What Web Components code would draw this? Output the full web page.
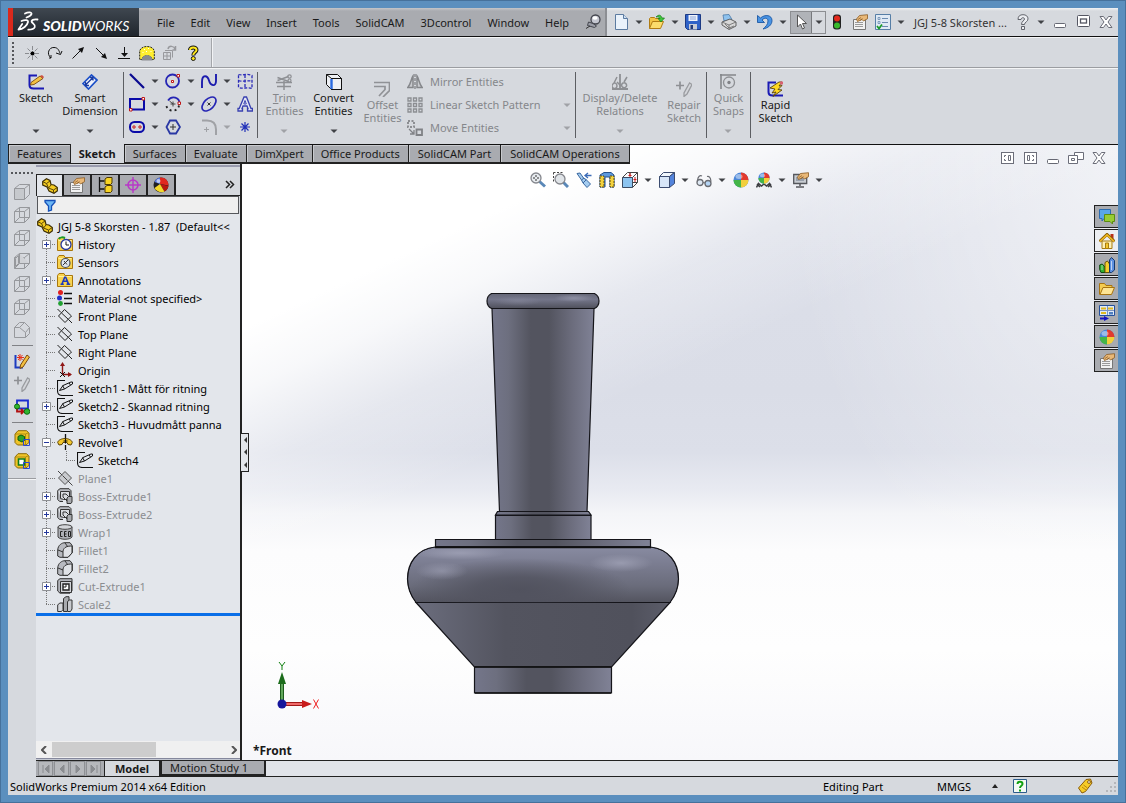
<!DOCTYPE html>
<html lang="en">
<head>
<meta charset="utf-8">
<meta name="viewport" content="width=device-width, initial-scale=1">
<title>SolidWorks Premium 2014</title>
<style>
    :root {
        --face: #d6d9de;
        --panel: #e3e6eb;
        --tab: #a9abb0;
        --ink: #1a1a1a;
        --dim: #85878b;
    }

    body {
        margin: 0;
        font-family: "Noto Sans", "Open Sans", sans-serif;
        font-size: 11px;
        line-height: 13px;
        color: var(--ink);
    }
</style>
</head>
<body>
<sw-app>
    <sw-titlebar slot="title"></sw-titlebar>
    <sw-quickbar slot="quick"></sw-quickbar>
    <sw-ribbon slot="ribbon"></sw-ribbon>
    <sw-tabs slot="tabs" items="Features,Sketch,Surfaces,Evaluate,DimXpert,Office Products,SolidCAM Part,SolidCAM Operations" active="Sketch"></sw-tabs>
    <sw-sidebar slot="side"></sw-sidebar>
    <sw-tree-panel slot="tree">
        <sw-tree-item icon="history" expand="plus">History</sw-tree-item>
        <sw-tree-item icon="sensors">Sensors</sw-tree-item>
        <sw-tree-item icon="annotations" expand="plus">Annotations</sw-tree-item>
        <sw-tree-item icon="material">Material &lt;not specified&gt;</sw-tree-item>
        <sw-tree-item icon="plane">Front Plane</sw-tree-item>
        <sw-tree-item icon="plane">Top Plane</sw-tree-item>
        <sw-tree-item icon="plane">Right Plane</sw-tree-item>
        <sw-tree-item icon="origin">Origin</sw-tree-item>
        <sw-tree-item icon="sketchItem">Sketch1 - Mått för ritning</sw-tree-item>
        <sw-tree-item icon="sketchItem" expand="plus">Sketch2 - Skannad ritning</sw-tree-item>
        <sw-tree-item icon="sketchItem">Sketch3 - Huvudmått panna</sw-tree-item>
        <sw-tree-item icon="revolve" expand="minus">Revolve1</sw-tree-item>
        <sw-tree-item icon="sketchItem" nested>Sketch4</sw-tree-item>
        <sw-tree-item icon="planeOff" off>Plane1</sw-tree-item>
        <sw-tree-item icon="extrude" expand="plus" off>Boss-Extrude1</sw-tree-item>
        <sw-tree-item icon="extrude" expand="plus" off>Boss-Extrude2</sw-tree-item>
        <sw-tree-item icon="wrap" expand="plus" off>Wrap1</sw-tree-item>
        <sw-tree-item icon="fillet" off>Fillet1</sw-tree-item>
        <sw-tree-item icon="fillet" off>Fillet2</sw-tree-item>
        <sw-tree-item icon="cut" expand="plus" off>Cut-Extrude1</sw-tree-item>
        <sw-tree-item icon="scale" off last>Scale2</sw-tree-item>
    </sw-tree-panel>
    <sw-viewport slot="view"></sw-viewport>
    <sw-study-tabs slot="study"></sw-study-tabs>
    <sw-status slot="status"></sw-status>
</sw-app>

<script>
// ---- icons, all on a 16x16 grid ----
const cube = (extra) => `<g fill="none" stroke="#96989c"><path d="M.5 4.500h10v11H.5zM.5 4.500l5-4h10v10l-5 5M10.500 4.500l5-4"/>${extra}</g>`;
const ball = `<circle cx="8" cy="8" r="7.500" fill="#4a86d8"/><path d="M8 8V.5A7.500 7.500 0 0 1 15.500 8z" fill="#e23a2e"/><path d="M8 8h7.500A7.500 7.500 0 0 1 8 15.500z" fill="#f2cf3c"/><path d="M8 8v7.500A7.500 7.500 0 0 1 .5 8z" fill="#44b548"/><ellipse cx="6" cy="4.500" rx="3.500" ry="2.500" fill="#fff" opacity=".45"/>`;
const folder = `<path d="M.5 14.500v-11l1.500-2h5l1 2h7.500v11z" fill="#f8d34f" stroke="#a8760c"/><path d="M1.500 4.500h13" stroke="#fff0a0"/>`;
const hand = `<path d="M4.500 5l3-3.500 8-.8v4l-4 2.300-1.500-1.500L5.500 7.500z" fill="#e9b878" stroke="#8a5a22" stroke-width=".8"/><path d="M6 5.500l3-2M8 6.500l2.500-2" stroke="#8a5a22" stroke-width=".7"/>`;
const sheet = `<path d="M1.500 5.500h12v10h-12z" fill="#f2f2f2" stroke="#777"/><path d="M3 8.500h8M3 10.500h8M3 12.500h8" stroke="#9a9a9a"/>`;
const pencil = `<path d="M3 8.500L12 2l3 2.500L6 10.500 2.500 11z" fill="#f3c040" stroke="#7a4a10" stroke-width=".9"/><path d="M12 2l2-1 2 2-1 1.500z" fill="#d05040"/>`;
const gold = `<path d="M1 4L4 .7h8.500L15 3v9.500L12 15H3.500L1 12.500z" fill="#f0c428" stroke="#8a6a08"/><path d="M1 4h10.500v11M11.500 4L15 2.500" fill="none" stroke="#b08c14"/>`;

const ICONS = {
    arrow: `<path d="M4.500 6.500h7L8 10z" fill="#404246"/>`,
    arrowDim: `<path d="M4.500 6.500h7L8 10z" fill="#a0a2a6"/>`,
    pin: `<ellipse cx="10.500" cy="5.500" rx="4.500" ry="4.500" fill="#c4c6d0" stroke="#44464e" stroke-width="1.300"/><path d="M3.500 8L8 9.500l3.500 2.500-2 1.500-7-2z" fill="#9a9ca6" stroke="#44464e"/><path d="M5 12l-4 2.500" stroke="#333"/><ellipse cx="10" cy="4" rx="2.500" ry="1.800" fill="#fff"/>`,
    newDoc: `<path d="M2.500.5h8l4 4v11h-12z" fill="#eaf2fb" stroke="#5c7ba0"/><path d="M10.500.5v4h4" fill="#cfe0f2" stroke="#5c7ba0"/>`,
    open: `<path d="M.5 14.500v-10l1-1h4l1 1h5v3" fill="#f3c445" stroke="#b07c14"/><path d="M.5 14.500l3-7h11l-3 7z" fill="#fbdc6c" stroke="#b07c14"/><path d="M7 3c3-3 5-2 6 1h2.500L12 8 9 4.500h2C10 3 9 2.500 7 3z" fill="#3fc63f" stroke="#157a15" stroke-width=".7"/>`,
    save: `<path d="M.5.5h15v15h-13l-2-2z" fill="#2f62c8" stroke="#1c3a84"/><path d="M3.500 1h9v6h-9z" fill="#f0f4fb"/><path d="M5 3h6M5 5h6" stroke="#8aa4d8"/><path d="M4 10h8v5.500H4z" fill="#c8ccd4"/><path d="M5.500 11h2.500v4H5.500z" fill="#223a78"/>`,
    print: `<path d="M3 7L2 1l6-.5 3 5z" fill="#8ec2ee" stroke="#4a78a8" stroke-width=".8"/><path d="M1 8l8-3 6 3v4l-7 3.500L1 11z" fill="#d8d8d8" stroke="#555" stroke-width=".9"/><path d="M1 8l7 3 7-3M8 11v4M4 10l4 4 5-2" stroke="#666" fill="none" stroke-width=".8"/>`,
    undo: `<path d="M.5 1.500v7h7L5 6c3-3 6-2 6 1 0 4-3 6-5 8 5-1 9-4 9-8.500C15 1 8 0 3.500 4z" fill="#4a94e4" stroke="#1c58a4" stroke-width=".9"/>`,
    cursor: `<path d="M4.500 1v12l3-3 2 5 2-1-2-4.500h4z" fill="#fff" stroke="#555"/>`,
    traffic: `<rect x="4" y=".5" width="8" height="15" rx="3" fill="#222"/><circle cx="8" cy="4.500" r="3" fill="#e2281c"/><circle cx="8" cy="11.500" r="3" fill="#38b82c"/>`,
    props: sheet + hand,
    list: `<path d="M.5.5h15v15H.5z" fill="#dfe9f4" stroke="#567ea6"/><path d="M3 3.500h2v2H3zM3 7.500h2v2H3z" fill="none" stroke="#6a8ab0" stroke-width=".8"/><path d="M7 4.500h6M7 8.500h6M7 12.500h6" stroke="#6a8ab0"/><path d="M2 12l2 2.500 3-4" fill="none" stroke="#1a9a2a" stroke-width="1.800"/>`,
    helpOutline: `<path d="M3 5.500C3 2 5 .7 8 .7s5 1.600 5 4.200c0 3-3.500 3-3.500 5.600h-3c0-3.800 3-3.600 3-5.500C9.500 3.200 6.200 3.200 6 5.500zM6.500 12.500h3v3h-3z" fill="#eceef2" stroke="#55575f" stroke-width=".9"/>`,
    min: `<rect x="2.500" y="9.500" width="11" height="4" rx="1" fill="#fff" stroke="#666873"/>`,
    max: `<rect x="2.500" y="1.500" width="12" height="11" rx="1" fill="#fff" stroke="#555763"/><rect x="5.500" y="5" width="6" height="4" fill="#fff" stroke="#555763" stroke-width="1.300"/>`,
    close: `<path d="M2 2.500h3.500L8 6l2.500-3.500H14L10 8l4 5.500h-3.500L8 10l-2.500 3.500H2L6 8z" fill="#fff" stroke="#6b6d78"/>`,
    restore: `<path d="M6.500 2.500h9v7h-9z" fill="#fff" stroke="#6c6e7a"/><path d="M.5 5.500h9v8h-9z" fill="#fff" stroke="#6c6e7a"/><path d="M3.500 8.500h3v2h-3z" fill="none" stroke="#6c6e7a"/>`,
    dockL: `<rect x="2.500" y="2.500" width="12" height="11" fill="#fff" stroke="#6c6e7a"/><path d="M7 5.500H5.500v1.500M5.500 9v1.500H7M9.500 5.500h2v5h-2z" fill="none" stroke="#6c6e7a"/>`,
    dockR: `<rect x="2.500" y="2.500" width="12" height="11" fill="#fff" stroke="#6c6e7a"/><path d="M10 5.500h1.500v1.500M11.500 9v1.500H10M5.500 5.500h2v5h-2z" fill="none" stroke="#6c6e7a"/>`,

    // quick bar
    qPoint: `<path d="M1 8.500h14M8.500 1v14M3.500 3.500l10 10M13.500 3.500l-10 10" stroke="#8a8c90" stroke-dasharray="4 1"/><circle cx="8.500" cy="8.500" r="2" fill="#000"/>`,
    qArc: `<path d="M4 13C-1 9 2 2 7 2.500c4 0 5 3 6 6M4 13v-3M4 13H2M9 8l4.500 1.500L15 6" fill="none" stroke="#111"/>`,
    qUp: `<path d="M2.500 13.500L12 4" stroke="#111" fill="none"/><path d="M14 2l-2 6-4-4z" fill="#111"/>`,
    qDown: `<path d="M3 3l9 9" stroke="#111" fill="none"/><path d="M14 14L8 12l4-4z" fill="#111"/>`,
    qDrop: `<path d="M2 13.500h12M8.500 2v8" stroke="#111"/><path d="M5 8h7l-3.500 4z" fill="#111"/>`,
    qDome: `<path d="M.7 14.500V6C2 0 14 0 15.300 6v8.500H13c0-5-10-5-10 0z" fill="#ffee30" stroke="#222" stroke-dasharray="2 1"/><path d="M2.500 15.500c0-7 11-7 11 0z" fill="#8a8c90"/><path d="M5 4.500h1M9 3.500h1M7 6.500h1M11.500 6.500h1M3.500 7.500h1" stroke="#fff"/>`,
    qCube: `<path d="M1.500 7.500h7v7h-7zM5 7.500v7M1.500 11h7M3 5.500h7.500v7" fill="none" stroke="#98999d"/><path d="M6 4c1-4 6-3 7 0M13.500 1v4h-3" fill="none" stroke="#98999d" stroke-width="1.500"/>`,
    qHelp: `<path d="M5 5c0-3.500 6.500-3.500 6.500 0C11.500 7.500 8.300 7 8.300 10.500" fill="none" stroke="#111" stroke-width="4"/><path d="M5 5c0-3.500 6.500-3.500 6.500 0C11.500 7.500 8.300 7 8.300 10" fill="none" stroke="#ffe81c" stroke-width="2"/><circle cx="8.300" cy="13.500" r="2" fill="#ffe81c" stroke="#111"/>`,

    // ribbon
    sketch: `<path d="M9 1.500H1.500V11c0 3 2 3.500 4 3.500H16" fill="none" stroke="#1a1ab4" stroke-width="2"/>` + pencil,
    smartDim: `<path d="M1 9.500L9.500 1l5.500 5-8.500 9z" fill="#eef2fa" stroke="#1c50c8" stroke-width="1.700"/><path d="M4 10.500l6.500-6.500M3.500 8v3.500H7M8 3.500h3v3" fill="none" stroke="#1c3ca0" stroke-width="1.300"/>`,
    line: `<path d="M1 1l14 14" stroke="#0a0a90" stroke-width="2.200"/>`,
    rect: `<path d="M1 3h14v10.500H1z" fill="none" stroke="#0a0aa8" stroke-width="2"/><path d="M13 1.500h2.500V4H13zM.5 12.500H3V15H.5z" fill="#fff" stroke="#c01818"/>`,
    slot: `<rect x="1" y="3" width="14" height="10" rx="4.500" fill="none" stroke="#0a0aa8" stroke-width="2"/><path d="M4 7h2v2H4zM10 7h2v2h-2z" fill="#fff" stroke="#c01818"/>`,
    circle: `<circle cx="7.500" cy="8" r="6.500" fill="none" stroke="#2626b4" stroke-width="1.800"/><path d="M6.500 7.500h2v2h-2zM12 1.500h2.500V4H12z" fill="#fff" stroke="#c01818"/>`,
    arc: `<path d="M3 4.500c4-5.500 11.500-3 11.500 3" fill="none" stroke="#2626b4" stroke-width="1.700"/><path d="M14 9.500c-1 7-12 7-13-1" fill="none" stroke="#222" stroke-width="1.800" stroke-dasharray="2 3"/><path d="M5.500 8h5M8 5.500v5M4.500 5L8 8" stroke="#444" fill="none"/><path d="M13 6h2.500v2.500H13z" fill="#fff" stroke="#c01818"/>`,
    polygon: `<path d="M5 1.500h6L15 8l-4 6.500H5L1.500 8z" fill="none" stroke="#2a38a4" stroke-width="1.800"/><path d="M5 8h6M8 5v6" stroke="#333"/>`,
    spline: `<path d="M1 15V9C1 1 6.500 2 8 7.500S15 14 15 8V1" fill="none" stroke="#1c1cae" stroke-width="1.900"/>`,
    ellipse: `<ellipse cx="8" cy="8" rx="8.500" ry="5" transform="rotate(-45 8 8)" fill="none" stroke="#2626b4" stroke-width="1.700"/><path d="M6.500 6.500l3 3M9.500 6.500l-3 3" stroke="#333"/>`,
    sketchFillet: `<path d="M1 1.500h5c6 0 9 3 9 9V16" fill="none" stroke="#a0a2a6" stroke-width="2"/><path d="M3 10.500h5M5.500 8v5" stroke="#a0a2a6"/>`,
    dashPlane: `<path d="M1.500 1.500C6 3 9 0 15 2.500v13c-5-2-9 1-13.500-1zM1.500 7.500c5 2 9-1 13.500 1M8 2v12" fill="none" stroke="#2a2ab8" stroke-width="1.300" stroke-dasharray="3 1.500"/>`,
    letterA: `<path d="M7 1h2.500l4.500 11.500h1.500v2.500h-5v-2.500H11L10 10H6l-1 2.500h.5v2.500H1v-2.500h1.200z" fill="#e4e6f4" stroke="#3840b0" stroke-width="1.300"/><path d="M6.800 8h2.500L8 4.500z" fill="#fff" stroke="#3840b0"/>`,
    point: `<path d="M3 8h10M8 3v10M4.500 4.500l7 7M11.500 4.500l-7 7" stroke="#2030b8" stroke-width="1.200"/>`,
    trim: `<path d="M0 8.500h16M1 12.500h14M8 7v9" stroke="#8e9094" stroke-width="1.500"/><path d="M1.500 3.500l11 4M1.500 6.500l11-4" stroke="#8e9094" stroke-width="1.500" fill="none"/><circle cx="13.500" cy="2.500" r="1.700" fill="none" stroke="#8e9094" stroke-width="1.200"/><circle cx="13.500" cy="6.500" r="1.500" fill="none" stroke="#8e9094" stroke-width="1.200"/>`,
    convert: `<path d="M.5.5h11l4 4v11h-10l-5-5z" fill="#eef0f3" stroke="#111"/><path d="M.5.5l5 4h10M5.500 4.500h10v11h-10z" fill="none" stroke="#111"/><path d="M5.500 5v10" stroke="#2a6ae0" stroke-width="2.400"/>`,
    offset: `<path d="M0 1.500h15.500v8L9 16M0 5.500h11v3L5 15" fill="none" stroke="#909296" stroke-width="1.700"/>`,
    mirror: `<path d="M8 0v16" stroke="#808286" stroke-width="1.300" stroke-dasharray="3 1"/><path d="M6 2C4 5 4 10 .8 13.500H6zM10 2c2 3 2 8 5.200 11.500H10z" fill="#c8cace" stroke="#85878b" stroke-width="1.500"/>`,
    pattern: `<path d="M1 1h3v3H1zM6.500 1h3v3h-3zM12 1h3v3h-3zM1 6.500h3v3H1zM6.500 6.500h3v3h-3zM12 6.500h3v3h-3zM1 12h3v3H1zM6.500 12h3v3h-3zM12 12h3v3h-3z" fill="none" stroke="#8c8e92" stroke-width="1.300"/>`,
    move: `<path d="M1 1h6v6H1z" fill="none" stroke="#8c8e92" stroke-width="2" stroke-dasharray="2 1.500"/><path d="M9.500 9.500h5.500v5.500H9.500z" fill="none" stroke="#808286" stroke-width="1.800"/><path d="M2 9l5 5M3 14h4v-4" fill="none" stroke="#808286" stroke-width="1.300"/>`,
    relations: `<path d="M0 15h16M8 0v14" stroke="#8e9094" stroke-width="1.800"/><path d="M5 3L2 9M5 12a2.500 2.500 0 1 1-4-2c1-2 4-1 4 2zM15 3l-3 5M14.500 12A2.500 2.500 0 1 1 11 9c2-1 4 1 3.500 3zM5 8l4 4" fill="none" stroke="#8e9094" stroke-width="1.500"/>`,
    repair: `<path d="M0 4.500h8M4 .5v8" stroke="#8e9094" stroke-width="1.700"/><path d="M13.500 2L8 12v3.500L11 13l5-9.500z" fill="#d4d6da" stroke="#9a9ca0" stroke-width="1.300"/>`,
    snaps: `<path d="M0 1h16M1 0v15" stroke="#85878b" stroke-width="1.600"/><circle cx="9" cy="8.500" r="5.500" fill="none" stroke="#8e9094" stroke-width="1.300"/><circle cx="9" cy="8.500" r="1.700" fill="#808286"/>`,
    rapid: `<path d="M9 1.500H1.500V11c0 3 2 3.500 4 3.500H16" fill="none" stroke="#1a1ab4" stroke-width="2"/><path d="M12 1L3 7l5 1-3 4 4-1-3 4.500L15 9l-4-.5 4-4-3 .5 3-4z" fill="#ffd820" stroke="#5a4208" stroke-width=".9"/><circle cx="14.500" cy="2" r="1.700" fill="#d86070"/>`,

    // side bar
    cubeFront: cube('<path d="M1 5h9v10H1z" fill="#c6c9cd" stroke="none"/>'),
    cube1: cube('<path d="M5.500.500v10h10M5.500 10.500l-5 5"/>'),
    cube2: cube('<path d="M5.500.500v10h10M5.500 10.500l-5 5M1.500 5.500l3-3v8l-3 3z" fill="#d0d2d6"/>'),
    cubeCut: `<path d="M.5 5.500l5-5h5l5 5v6l-4 4H.5zM.5 5.500h5l6 5v5M10.500.5l-5 5M15.500 5.500l-4 5" fill="none" stroke="#96989c"/>`,
    penRed: `<path d="M1.500 2v12.500H9" fill="none" stroke="#1c3cc0" stroke-width="2"/><path d="M13 2l2.500 2L9 14l-3 1.500L6.500 12z" fill="#f3c040" stroke="#7a4a10"/><path d="M6 1v7M3 4.500h7M4 2l4.500 5M8.500 2L4 7" stroke="#e83018"/>`,
    blueRed: `<path d="M3 1.500h11v8H3z" fill="none" stroke="#1c2cd0" stroke-width="1.800"/><path d="M3 9v3.500h6M7 10l2.500 2.500L7 15" fill="none" stroke="#b01010" stroke-width="1.800"/><circle cx="3" cy="7.500" r="2.500" fill="#2fb42f" stroke="#0c6c0c"/><circle cx="13" cy="12.500" r="2.800" fill="#2fb42f" stroke="#0c6c0c"/>`,
    goldGreen: gold + `<path d="M4 6.500L7 5l3.500 1.500v4L8 12l-4-2z" fill="#2ca428" stroke="#0c5c0c"/><path d="M9.500 9.500h6v6h-6z" fill="none" stroke="#2a48d0"/>`,
    goldHole: gold + `<path d="M4.500 6h6v6h-6z" fill="#fff" stroke="#0c7c1c" stroke-width="1.600"/><path d="M9.500 9.500h6v6h-6z" fill="none" stroke="#2a48d0"/>`,

    // panel tabs and tree
    part: `<path d="M.7 3.500L4.500.8 8 2.500l1 4 3 .5 3.300 2.500v3.500L12 15.300 7 13l-2-4-4.300-2z" fill="#f4cc22" stroke="#3c2e04" stroke-width="1.200"/><path d="M1 3.800l3.500 1.700 2 4.500 5 2 3.500-2.300M4.500 5.500L8 3M6.500 10L9 7M11.500 12v3" fill="none" stroke="#5a4608"/>`,
    config: `<path d="M2.500 0v15M2.500 4h5M2.500 12h5" stroke="#111" stroke-width="1.300" fill="none"/><path d="M8 2l2-1.500h5V6l-1.500 1.500H8zM8 10l2-1.500h5V14l-1.500 1.500H8z" fill="#f8d424" stroke="#4c3a06"/>`,
    target: `<circle cx="8" cy="8" r="5" fill="none" stroke="#b838c8" stroke-width="1.600"/><path d="M8 0v16M0 8h16" stroke="#b838c8" stroke-width="1.400"/>`,
    ballDark: `<circle cx="8" cy="8" r="7.500" fill="#202024"/><path d="M7 7L1.500 5A7.500 7.500 0 0 1 7 .5z" fill="#5878e0"/><path d="M7 7V.5c5-.5 8.500 3 8.500 8z" fill="#e02820"/><path d="M7 7l8.500 2c-.5 2.500-2 4.500-4 5.500z" fill="#b81810"/><path d="M7 7l4.500 7.700C8 16 3 14.500 1.500 11z" fill="#f4d82c"/><circle cx="5.500" cy="4" r="2" fill="#fff" opacity=".6"/>`,
    filter: `<path d="M3 3.500h10v1.500L9.500 9v4l-3 1V9L3 5z" fill="#6cb6f4" stroke="#1450b8" stroke-width="1.300"/>`,
    history: folder + `<circle cx="9" cy="8.500" r="5" fill="#fff" stroke="#2838a0" stroke-width="1.300"/><path d="M9 5.500v3.500h3" fill="none" stroke="#111"/><path d="M2 3c1-2 4-2 6-1" stroke="#1a9a2a" stroke-width="2" fill="none"/>`,
    sensors: folder + `<circle cx="8.500" cy="9" r="4.500" fill="#dfe6f0" stroke="#444c60" stroke-width="1.200"/><path d="M6 11l5-5M7 7l3 3.500" stroke="#333"/>`,
    annotations: folder + `<path d="M7.200 4.500h2l3 7h1v1.500H9.500v-1.500h.7L9.800 10H6.500l-.5 1.500h.8v1.500H3.500v-1.500h.8z" fill="#1c38c0"/><path d="M7.200 8.500h2L8.200 6z" fill="#f8d34f"/>`,
    material: `<path d="M7 3.500h8M7 8.500h8M7 13.500h8" stroke="#111" stroke-width="1.400"/><circle cx="3.500" cy="2.500" r="2.500" fill="#e02020"/><circle cx="2.500" cy="8" r="2.500" fill="#2030c8"/><circle cx="3.500" cy="13.500" r="2.400" fill="#20a030"/>`,
    plane: `<path d="M7.500 1.500l7 6.500-6.500 6.500L1.500 8zM.5 1l3.500 3.500M11.500 11.500l3.500 3.500M4.500 5l7 6.500" fill="none" stroke="#222"/>`,
    planeOff: `<path d="M8 1.500L14.500 8 8 14.500 1.500 8z" fill="#c8cace" stroke="#555"/><path d="M1 1l4 4M11 11l4.500 4.500M5.500 5.500l5 5" fill="none" stroke="#444"/>`,
    origin: `<path d="M5.500 3v9M5.500 12.500H14" stroke="#901818" stroke-width="1.400"/><path d="M3 4l2.500-4L8 4zM11 10l4 2.500-4 2.500z" fill="#901818"/><path d="M3 10l5 5M8 10l-5 5" stroke="#111"/>`,
    sketchItem: `<path d="M8 .5H.5v10c0 4 2 5 5 5H16" fill="none" stroke="#111" stroke-width="1.100"/><path d="M2.500 10.500l3.500-5 8-3.500h1.500v2l-8 5zM5.500 5.500L7.500 9M12 3l1.500 2" fill="none" stroke="#111"/>`,
    revolve: `<path d="M8.500 0v4M8.500 11v5" stroke="#111" stroke-width="1.300"/><path d="M.7 8.500C1 6 5 4.500 8 4.500s7 1.500 7.300 4L14 11l-3-.5-1-2H6l-1 2-3 .5z" fill="#f2c62c" stroke="#5c4406"/><path d="M8.500 4.500v5M6.500 7h4" stroke="#111"/>`,
    extrude: `<path d="M.7 2.500L3 .7h9l2 2V8M.7 2.500v9l2 2H6" fill="#b8bac0" stroke="#333"/><path d="M3.500 3.500h9v8h-6l-3-1z" fill="#d8dade" stroke="#333"/><path d="M6 6h3l3 3M6 6v3l4 4" stroke="#333" fill="none"/><path d="M10 10l1.500-1.500H15V14l-1 1.500h-4z" fill="#a8aaae" stroke="#333"/>`,
    wrap: `<path d="M1 3v10c2 3 12 3 14 0V3z" fill="#aeb0b6" stroke="#444"/><ellipse cx="8" cy="3" rx="7" ry="2.300" fill="#d4d6da" stroke="#444"/><path d="M5.500 7.500H3.500v5h2M9.500 7.500h-2v5h2M7.500 10h2M11.500 7.500h2v5h-2z" fill="none" stroke="#222"/>`,
    fillet: `<path d="M.7 14V8C1 3 5 .7 8 .7h5l2.300 3v7L11 15.300H3z" fill="#b8bac0" stroke="#333"/><path d="M6 15.300V9c1-4 4-5 9-5v7l-4 4.300z" fill="#e0e2e6" stroke="#333"/><path d="M1 8l5 2M8 1l3 4" stroke="#333"/>`,
    cut: `<path d="M.7 2.500L3 .7h12v12l-2 2.500H3L.7 13z" fill="#b4b6bc" stroke="#333"/><path d="M3.500 3.500h11v11h-11z" fill="#d4d6da" stroke="#333"/><path d="M6 6h6v6H6z" fill="#fff" stroke="#222" stroke-width="1.400"/><path d="M9 6v3H6" fill="none" stroke="#222"/>`,
    scale: `<path d="M.7 9l2-2H6v6.500l-1.500 2H.7z" fill="#d4d6da" stroke="#333"/><path d="M6.500 2.500L9 .7h3v12l-2 2.800H6.500z" fill="#a8aaae" stroke="#333"/><path d="M10.500 5.500L12.500 4H15v9l-1.500 2.500h-3z" fill="#c8cace" stroke="#333"/>`,

    // heads-up bar
    zoomFit: `<path d="M9.500 9.500l5.500 5" stroke="#5a88b8" stroke-width="3"/><circle cx="6" cy="6" r="5" fill="#e8ecf0" stroke="#85878d" stroke-width="1.300"/><path d="M6 3v6M3 6h6" stroke="#333"/><path d="M5 5h2v2H5z" fill="#e8ecf0"/>`,
    zoomArea: `<path d="M10.500 10.500l4.500 4.500" stroke="#5a88b8" stroke-width="3"/><path d="M.5.5h10M.5.5v10" stroke="#444" stroke-dasharray="2 1.500"/><circle cx="7" cy="7" r="5" fill="#e0e4e8" stroke="#85878d" stroke-width="1.300"/>`,
    prevView: `<path d="M1 1.500l3-.5 3.500 5L10 7.500l4.500 4.500-3.500 3.500L7 11l-1.500-3z" fill="#a4ccf0" stroke="#3a68a0"/><path d="M5.500 8l2.500-2M7 11l3.500-3.500" stroke="#3a68a0"/><path d="M9.500 3.500h6M12 1L9 3.500 12 6" stroke="#3c6cb8" stroke-width="1.300" fill="none"/>`,
    section: `<path d="M1 3l4-2.500h7l3 2.500v12h-4V5H6v10H1z" fill="#5c98dc" stroke="#24508c"/><path d="M1 4h4v11H1zM11 4h4v11h-4z" fill="#f4d23c" stroke="#5a4a10" stroke-dasharray="2 1"/>`,
    viewCube: `<path d="M.5 5.500h10v10H.5z" fill="#8cc4f0" stroke="#3c4c64"/><path d="M.5 5.500l5-5h10v10l-5 5M10.500 5.500l5-5M8 3v-2.500M10.500 10.500h5" fill="none" stroke="#444"/><path d="M8 1v4M6.500 3.500h3M13 5v5M11.500 7.500h3" stroke="#d02020"/>`,
    shaded: `<path d="M.5 4.500h10v11H.5z" fill="#d8e6f8" stroke="#3c4c70"/><path d="M.5 4.500l4-4h11l-5 4z" fill="#f0f6fc" stroke="#3c4c70"/><path d="M10.500 4.500l5-4v11l-5 4z" fill="#5484dc" stroke="#3c4c70"/>`,
    glasses: `<circle cx="4" cy="10.500" r="3" fill="#dfe9f4" stroke="#6a6c72" stroke-width="1.300"/><circle cx="12" cy="11.500" r="3" fill="#b4d4f4" stroke="#6a6c72" stroke-width="1.300"/><path d="M7 10.500l2 .5M1.500 8.500C2 4 4 3 6 4M15 9.500C14.500 5 13 4 11 4.500" fill="none" stroke="#6a6c72" stroke-width="1.200"/>`,
    ball,
    ballScene: `<path d="M.5 15.500l2-4 3 2.500 2.500-2 2.500 2 3-2.500 2 4M1 12l3 3M15 12l-3 3" fill="none" stroke="#3c3e42" stroke-width="1.500"/><g transform="translate(2 0) scale(.75)">${ball}</g>`,
    monitor: `<path d="M.7 2.500h13v9H.7z" fill="#c8ccd2" stroke="#55575c" stroke-width="1.300"/><path d="M3 5h8v4H3z" fill="#98a0ac"/><path d="M7 12v2M3 15h8" stroke="#55575c" stroke-width="1.500"/>${hand}`,

    // task pane
    chat: `<path d="M.5.5h11v9H5l-2 2.500v-2.500H.5z" fill="#5aa6e8" stroke="#2c6cb0"/><path d="M5.500 5.500h10v7h-2V15L11 12.500H5.500z" fill="#98cc34" stroke="#5c8c10"/>`,
    home: `<path d="M11.500 1h3v6h-3z" fill="#b83018"/><path d="M3 8h10v7.500H3z" fill="#fdf0b8" stroke="#a87c10"/><path d="M.5 8.500L8 1.500l7.500 7" fill="none" stroke="#8a6008" stroke-width="3"/><path d="M.8 8.500L8 1.800l7.200 6.700" fill="none" stroke="#f0b820" stroke-width="1.700"/><path d="M6.500 10h3v5.500h-3z" fill="#f4c830" stroke="#a87c10"/>`,
    library: `<path d="M.7 8l2.500-1L6 10v5.500H2l-1.300-3z" fill="#30b030" stroke="#104c10"/><path d="M6 5.500L8.500 4l2 3v8.500H6z" fill="#f4d030" stroke="#6c5408"/><path d="M10.500 3l2-2.500 3 3V13l-3 2.500h-2z" fill="#5c90e0" stroke="#14386c"/><path d="M3 8v5M12.500 4v9" stroke="#fff" opacity=".6"/>`,
    folderOpen: `<path d="M.5 13.500v-11h5l1.500 2h6v3" fill="#f4cc50" stroke="#a87410"/><path d="M1 13.500l3-7h11.500l-3 7z" fill="#fde494" stroke="#a87410"/>`,
    palette: `<path d="M.5.5h15v10H.5z" fill="#dfeaf8" stroke="#24509c"/><path d="M2 3.500h5M9 3.500h5M2 8h5" stroke="#e0b820" stroke-width="2"/><path d="M8.500 1v9M1 5.500h14" stroke="#7c94c0"/><path d="M10 7h4v2.500h-4z" fill="#5080c0"/><path d="M1 13.500h5" stroke="#1414c0" stroke-width="2"/><path d="M5 11l5 2.500L5 16z" fill="#1414c0"/>`,

    // status bar
    helpTip: `<path d="M1.500 1.500h13v13h-13z" fill="#f4faf4" stroke="#2c5c8c"/><path d="M5.500 6c0-3 5-3 5 0 0 2-2.500 1.500-2.500 4M8 11.500v2" fill="none" stroke="#10a010" stroke-width="2"/>`,
    tag: `<path d="M1.500 10L9 1.500l4.500-.5L15 5 8.500 13.500 5 15z" fill="#f6cc28" stroke="#8a5c08"/><circle cx="12" cy="4" r="1.400" fill="#fff" stroke="#8a5c08"/><path d="M5 9l4 3M6.500 7l4 3" stroke="#b88410"/>`,
    grip: `<path d="M12 4h2v2h-2zM8 8h2v2H8zM12 8h2v2h-2zM4 12h2v2H4zM8 12h2v2H8zM12 12h2v2h-2z" fill="#b4b6ba"/>`,
};

const BASE = `
    :host, * { box-sizing: border-box; }
    button {
        margin: 0; padding: 0; border: 0; background: none;
        font: inherit; color: inherit; cursor: default;
    }
`;

class SwElement extends HTMLElement {
    constructor() {
        super();
        this.attachShadow({ mode: 'open' });
    }

    connectedCallback() {
        this.shadowRoot.innerHTML = `<style>${BASE}${this.css()}</style>${this.html()}`;
    }

    css() { return ''; }
    html() { return '<slot></slot>'; }
}

class SwIcon extends SwElement {
    css() {
        return `:host { display: block; flex: none; width: 16px; height: 16px; } svg { display: block; }`;
    }
    html() {
        return `<svg width="16" height="16" viewBox="0 0 16 16" aria-hidden="true">${ICONS[this.getAttribute('name')] || ''}</svg>`;
    }
}

// icon button with an optional drop arrow on its right
class SwTool extends SwElement {
    css() {
        return `
            :host { display: flex; align-items: center; flex: none; height: 23px; }
            :host([pressed]) { outline: 1px solid #8c8e92; outline-offset: -1px; }
            button { display: flex; align-items: center; justify-content: center; height: 23px; }
            .drop { width: 20px; }
            :host([pressed]) .main { width: 22px; background: #b0b3b8; border: 1px solid #77797d; }
            :host([pressed]) .drop { width: 14px; }
        `;
    }
    html() {
        const label = this.getAttribute('label') || this.getAttribute('icon');
        const drop = this.hasAttribute('drop')
            ? `<button class="drop" aria-label="${label} options"><sw-icon name="${this.hasAttribute('dim') ? 'arrowDim' : 'arrow'}"></sw-icon></button>` : '';
        return `<button class="main" aria-label="${label}"><sw-icon name="${this.getAttribute('icon')}"></sw-icon></button>${drop}`;
    }
}

class SwApp extends SwElement {
    css() {
        return `
            :host { display: flex; min-height: 100vh; padding: 1px; background: #46719b; }
            .frame { flex: 1; display: flex; padding: 7px; background: #5b8fbe; }
            .window { flex: 1; min-width: 0; display: flex; flex-direction: column; background: var(--face); }
            .body { flex: 1; display: flex; position: relative; }
            .tabs { position: absolute; left: 0; top: 0; z-index: 2; }
            .side { width: 28px; padding-top: 20px; flex: none; }
            .work { flex: 1; min-width: 0; display: flex; flex-direction: column; }
            .split { flex: 1; display: flex; }
            .tree { width: 206px; flex: none; display: flex; padding-top: 20px; border-right: 2px solid #222; background: var(--face); }
            .tree ::slotted(*) { flex: 1; min-width: 0; }
            .view { flex: 1; min-width: 0; display: flex; }
            .view ::slotted(*) { flex: 1; }
            .handle {
                position: absolute; left: 233px; top: 288px; width: 8px; height: 39px;
                display: flex; flex-direction: column; justify-content: space-around; align-items: center;
                background: var(--panel); border: 1px solid #222; border-left: 0; z-index: 2;
            }
        `;
    }
    html() {
        const tick = '<svg width="4" height="6"><path d="M4 0v6L1 3z" fill="#333"/></svg>';
        return `
            <div class="frame"><div class="window">
                <slot name="title"></slot>
                <slot name="quick"></slot>
                <slot name="ribbon"></slot>
                <div class="body">
                    <div class="tabs"><slot name="tabs"></slot></div>
                    <div class="side"><slot name="side"></slot></div>
                    <div class="work">
                        <div class="split">
                            <div class="tree"><slot name="tree"></slot></div>
                            <div class="view"><slot name="view"></slot></div>
                        </div>
                        <slot name="study"></slot>
                    </div>
                    <button class="handle" aria-label="Collapse panel">${tick}${tick}${tick}</button>
                </div>
                <slot name="status"></slot>
            </div></div>
        `;
    }
}

class SwTitlebar extends SwElement {
    css() {
        return `
            :host { display: flex; align-items: stretch; height: 29px; border-bottom: 1px solid #111; background: linear-gradient(#f0f2f4, var(--face) 3px); }
            .logo { display: flex; align-items: center; width: 131px; border-left: 5px solid #da291c; background: linear-gradient(#3f4750, #20262d); }
            .logo svg { display: block; }
            nav { display: flex; align-items: center; justify-content: space-between; width: 468px; padding: 0 4px 0 18px; background: linear-gradient(#c4c6ca, var(--tab) 3px); border-right: 2px solid #8c8e93; }
            .tools { display: flex; align-items: center; padding-left: 6px; }
            .tools sw-tool[pressed] { margin: 0 3px 0 -3px; }
            .gap { display: flex; gap: 7px; }
            .doc { flex: 1; align-self: center; padding-left: 3px; white-space: nowrap; overflow: hidden; color: #333; }
            .win { display: flex; align-items: center; gap: 7px; padding-right: 4px; }
            .win sw-tool:first-child { margin-right: -6px; }
        `;
    }
    html() {
        const menus = ['File', 'Edit', 'View', 'Insert', 'Tools', 'SolidCAM', '3Dcontrol', 'Window', 'Help'];
        return `
            <div class="logo">
                <svg width="126" height="28" viewBox="0 0 126 28" role="img" aria-label="SolidWorks">
                    <g fill="none" stroke="#fff" stroke-width="1.800" stroke-linecap="round" stroke-linejoin="round">
                        <path d="M12 5.500c3-1.500 7-1.500 6.500.5-.5 1.500-3 2.800-5 3.500"/>
                        <path d="M8.500 13c3-1.300 7-1.300 6.500 1-.7 3.500-5 7.300-9.500 7.500l3.700-5.500"/>
                        <path d="M24.500 11.500c-4-.6-6.500.8-5.700 2.500.8 1.700 4 2.500 3 5-.8 2-3.500 2.700-6.500 2.700"/>
                    </g>
                    <text x="30" y="23" font-family="Lato, sans-serif" font-size="14" font-style="italic" fill="#fff"><tspan font-weight="900">SOLID</tspan><tspan font-weight="400">WORKS</tspan></text>
                </svg>
            </div>
            <nav aria-label="Main menu">
                ${menus.map((m) => `<button>${m}</button>`).join('')}
                <button aria-label="Pin menu"><sw-icon name="pin"></sw-icon></button>
            </nav>
            <div class="tools">
                <sw-tool icon="newDoc" label="New" drop></sw-tool>
                <sw-tool icon="open" label="Open" drop></sw-tool>
                <sw-tool icon="save" label="Save" drop></sw-tool>
                <sw-tool icon="print" label="Print" drop></sw-tool>
                <sw-tool icon="undo" label="Undo" drop></sw-tool>
                <sw-tool icon="cursor" label="Select" drop pressed></sw-tool>
                <div class="gap">
                    <sw-tool icon="traffic" label="Rebuild"></sw-tool>
                    <sw-tool icon="props" label="File properties"></sw-tool>
                    <sw-tool icon="list" label="Options" drop></sw-tool>
                </div>
            </div>
            <div class="doc">JGJ 5-8 Skorsten ...</div>
            <div class="win">
                <sw-tool icon="helpOutline" label="Help" drop></sw-tool>
                <sw-tool icon="min" label="Minimize"></sw-tool>
                <sw-tool icon="max" label="Maximize"></sw-tool>
                <sw-tool icon="close" label="Close"></sw-tool>
            </div>
        `;
    }
}

class SwQuickbar extends SwElement {
    css() {
        return `
            :host { display: flex; height: 31px; border-top: 1px solid #f4f5f6; border-bottom: 1px solid #9b9da1; }
            .bar { display: flex; align-items: center; gap: 7px; width: 204px; padding-left: 4px; border-right: 1px solid #a4a6aa; box-shadow: 1px 0 #f2f3f5; }
            .grab { width: 2px; height: 22px; margin-right: 3px; background: repeating-linear-gradient(#55575b 0 2px, transparent 2px 4px); }
        `;
    }
    html() {
        return `<div class="bar"><span class="grab"></span>
            ${['qPoint', 'qArc', 'qUp', 'qDown', 'qDrop', 'qDome', 'qCube', 'qHelp'].map((n) => `<sw-tool icon="${n}"></sw-tool>`).join('')}
        </div>`;
    }
}

// tall ribbon button: icon, caption, optional arrow pinned to the bottom
class SwBigButton extends SwElement {
    css() {
        return `
            :host { display: flex; flex: none; justify-content: center; }
            :host([dim]) { color: var(--dim); }
            button { display: flex; flex-direction: column; align-items: center; justify-content: space-between; padding: 5px 0; }
            :host([plain]) button { padding-top: 12px; justify-content: flex-start; }
            span { display: flex; flex-direction: column; align-items: center; text-align: center; }
            slot { display: block; }
            sw-icon { margin-bottom: 1px; }
            .drop { margin-bottom: 0; }
        `;
    }
    html() {
        const arrow = this.hasAttribute('plain') ? '' : `<sw-icon class="drop" name="${this.hasAttribute('dim') ? 'arrowDim' : 'arrow'}"></sw-icon>`;
        return `<button><span><sw-icon name="${this.getAttribute('icon')}"></sw-icon><slot></slot></span>${arrow}</button>`;
    }
}

class SwRibbon extends SwElement {
    css() {
        return `
            :host { display: flex; height: 77px; padding-left: 1px; border-top: 1px solid #f4f5f6; border-bottom: 1px solid #111; }
            hr { width: 1px; height: 66px; margin: 3px 0 0; border: 0; background: #5c5e62; flex: none; }
            .w40 { width: 40px; }
            .w43 { width: 43px; }
            .w49 { width: 49px; }
            .w54 { width: 54px; }
            .w88 { width: 88px; }
            .grid { display: grid; grid-template-columns: repeat(4, 36px); grid-auto-rows: 23px; width: 128px; margin-left: 5px; }
            .rows { display: grid; grid-auto-rows: 23px; width: 168px; padding-top: 1px; }
            .row { display: flex; align-items: center; color: var(--dim); }
            .row button { display: flex; align-items: center; gap: 7px; flex: 1; }
            .row .drop { flex: none; }
            .first { margin-left: 6px; }
            .gap { margin-left: 2px; }
        `;
    }
    html() {
        const t = (icon, extra = '') => `<sw-tool icon="${icon}" ${extra}></sw-tool>`;
        const row = (icon, text, drop) => `<div class="row"><button><sw-icon name="${icon}"></sw-icon>${text}</button>${drop ? `<button class="drop" aria-label="${text} options"><sw-icon name="arrowDim"></sw-icon></button>` : ''}</div>`;
        return `
            <sw-big-button class="w54" icon="sketch">Sketch</sw-big-button>
            <sw-big-button class="w54" icon="smartDim">Smart<br>Dimension</sw-big-button>
            <hr class="first">
            <div class="grid">
                ${t('line', 'drop')}${t('circle', 'drop')}${t('spline', 'drop')}${t('dashPlane')}
                ${t('rect', 'drop')}${t('arc', 'drop')}${t('ellipse', 'drop')}${t('letterA')}
                ${t('slot', 'drop')}${t('polygon')}${t('sketchFillet', 'drop dim')}${t('point')}
            </div>
            <hr>
            <sw-big-button class="w49 gap" icon="trim" dim><u>T</u>rim<br>Entities</sw-big-button>
            <sw-big-button class="w49" icon="convert">Convert<br>Entities</sw-big-button>
            <sw-big-button class="w49" icon="offset" dim plain>Offset<br>Entities</sw-big-button>
            <div class="rows">
                ${row('mirror', 'Mirror Entities')}
                ${row('pattern', 'Linear Sketch Pattern', true)}
                ${row('move', 'Move Entities', true)}
            </div>
            <hr>
            <sw-big-button class="w88" icon="relations" dim>Display/Delete<br>Relations</sw-big-button>
            <sw-big-button class="w40" icon="repair" dim plain>Repair<br>Sketch</sw-big-button>
            <hr class="gap">
            <sw-big-button class="w43" icon="snaps" dim>Quick<br>Snaps</sw-big-button>
            <hr>
            <sw-big-button class="w49" icon="rapid" plain>Rapid<br>Sketch</sw-big-button>
        `;
    }
}

class SwTabs extends SwElement {
    css() {
        return `
            :host { display: flex; height: 19px; border-right: 1px solid #222; }
            button { padding: 0 8px; height: 19px; background: var(--tab); border-bottom: 2px solid #222; border-left: 1px solid #222; box-shadow: inset 1px 1px #c8cace; }
            button:first-child { border-left: 0; padding: 0 6px; }
            .on { height: 20px; margin-top: -1px; background: var(--face); border-bottom: 1px solid #222; box-shadow: none; font-weight: bold; }
            button:nth-last-child(-n+2) { padding: 0 9px; }
        `;
    }
    html() {
        const active = this.getAttribute('active');
        return this.getAttribute('items').split(',')
            .map((t) => `<button role="tab" aria-selected="${t === active}" class="${t === active ? 'on' : ''}">${t}</button>`).join('');
    }
}

class SwSidebar extends SwElement {
    css() {
        return `
            :host { display: flex; flex-direction: column; align-items: center; padding: 6px 0; border-bottom: 1px solid #9b9da1; box-shadow: 0 1px #f4f5f6; }
            .grab { width: 22px; height: 2px; margin: 1px 0 6px; background: repeating-linear-gradient(90deg, #55575b 0 2px, transparent 2px 4px); }
            hr { width: 21px; height: 1px; margin: 4px 0 3px; border: 0; background: #808286; }
        `;
    }
    html() {
        const t = (n) => `<sw-tool icon="${n}"></sw-tool>`;
        return `<span class="grab"></span>
            ${['cubeFront', 'cube1', 'cube1', 'cube2', 'cube1', 'cube1', 'cubeCut'].map(t).join('')}
            <hr>${['penRed', 'repair', 'blueRed'].map(t).join('')}
            <hr>${['goldGreen', 'goldHole'].map(t).join('')}`;
    }
}

class SwTreeItem extends SwElement {
    css() {
        const v = 'repeating-linear-gradient(#777 0 1px, transparent 1px 2px)';
        const h = 'repeating-linear-gradient(90deg, #777 0 1px, transparent 1px 2px)';
        return `
            :host { display: flex; align-items: center; height: 18px; white-space: nowrap; color: #000; }
            :host([off]) { color: #8b8d91; }
            .guide, .inner { display: flex; align-items: center; flex: none; width: 20px; height: 18px; padding-left: 5px; background: ${v} 9px 0 / 1px 100% no-repeat, ${h} 9px 9px / 10px 1px no-repeat; }
            :host([nested]) .guide { background: ${v} 9px 0 / 1px 100% no-repeat; }
            :host([last]) .guide, .inner { background: ${v} 9px 0 / 1px 9px no-repeat, ${h} 9px 9px / 10px 1px no-repeat; }
            svg { display: block; }
            slot { display: block; margin-left: 5px; }
        `;
    }
    html() {
        const kind = this.getAttribute('expand');
        const box = kind ? `<button aria-label="${kind === 'plus' ? 'Expand' : 'Collapse'}"><svg width="9" height="9"><path d="M.5.5h8v8h-8z" fill="#fff" stroke="#8e9094"/><path d="M2 4.500h5${kind === 'plus' ? 'M4.500 2v5' : ''}" stroke="#24389c"/></svg></button>` : '';
        return `<span class="guide">${box}</span>${this.hasAttribute('nested') ? '<span class="inner"></span>' : ''}
            <sw-icon name="${this.getAttribute('icon')}"></sw-icon><slot></slot>`;
    }
}

class SwTreePanel extends SwElement {
    css() {
        return `
            :host { display: flex; flex-direction: column; border-top: 2px solid #9a9cae; }
            .tabs { display: flex; align-items: flex-end; height: 29px; border-bottom: 1px solid #222; }
            .tabs button { display: flex; align-items: center; justify-content: center; width: 28px; height: 21px; background: var(--tab); border: solid #222; border-width: 1px 2px 0 0; }
            .tabs button.on { height: 22px; background: var(--panel); border-left: 1px solid #222; margin-bottom: -1px; }
            .tabs .more { background: none; border: 0; margin-left: auto; width: 20px; }
            .filter { display: flex; align-items: center; height: 18px; margin: 0 1px; border: 1px solid #55575b; background: #efefef; padding-left: 4px; }
            .filter input { flex: 1; min-width: 0; border: 0; padding: 0; margin-left: 4px; background: none; font: inherit; outline: 0; }
            .tree { flex: 1; padding: 3px 0 0 1px; overflow: hidden; background: var(--panel); }
            .root { display: flex; align-items: center; gap: 5px; height: 18px; white-space: pre; color: #000; }
            .rollback { height: 3px; margin-left: -1px; background: #0a6fe8; }
            .scroll { display: flex; height: 17px; align-items: center; background: #f0f0f0; }
            .scroll i { flex: 0 0 104px; height: 15px; background: #cdcdcd; }
            .scroll button { width: 16px; height: 17px; display: flex; align-items: center; justify-content: center; }
            .scroll button:last-child { margin-left: auto; width: 12px; }
            .edge { height: 2px; background: #c4c8d2; border-top: 1px solid #85889c; }
        `;
    }
    html() {
        return `
            <div class="tabs">
                <button class="on" aria-label="Feature manager"><sw-icon name="part"></sw-icon></button>
                <button aria-label="Property manager"><sw-icon name="props"></sw-icon></button>
                <button aria-label="Configuration manager"><sw-icon name="config"></sw-icon></button>
                <button aria-label="Dimension manager"><sw-icon name="target"></sw-icon></button>
                <button aria-label="Display manager"><sw-icon name="ballDark"></sw-icon></button>
                <button class="more" aria-label="More"><svg width="10" height="9"><path d="M1 1l3.500 3.500L1 8M5 1l3.500 3.500L5 8" fill="none" stroke="#222" stroke-width="1.500"/></svg></button>
            </div>
            <div class="filter"><sw-icon name="filter"></sw-icon><input type="text" aria-label="Filter tree"></div>
            <div class="tree">
                <div class="root"><sw-icon name="part"></sw-icon>JGJ 5-8 Skorsten - 1.87  (Default&lt;&lt;</div>
                <slot></slot>
                <div class="rollback"></div>
            </div>
            <div class="scroll">
                <button aria-label="Scroll left"><svg width="6" height="8"><path d="M5 0L1 4l4 4" fill="none" stroke="#555" stroke-width="2"/></svg></button>
                <i></i>
                <button aria-label="Scroll right"><svg width="6" height="8"><path d="M1 0l4 4-4 4" fill="none" stroke="#555" stroke-width="2"/></svg></button>
            </div>
            <div class="edge"></div>
        `;
    }
}

class SwViewport extends SwElement {
    css() {
        return `
            :host {
                display: block; position: relative;
                background:
                    linear-gradient(155deg, #fff 18%, rgba(255,255,255,.8) 24%, rgba(255,255,255,.3) 32%, transparent 42%),
                    radial-gradient(ellipse 38% 80% at 100% 0, rgba(255,255,255,.6), transparent),
                    linear-gradient(#dde0ea 0, #dadde7 40%, #dcdfe9 50%, #e8eaf1 56%, #f4f5f8 60%, #fcfcfd 66%, #fefefe 82%, #f7f7fa);
            }
            .heads { position: absolute; left: 288px; top: 23px; display: flex; gap: 7px; }
            .heads sw-tool[drop] { margin-right: -6px; }
            .ctl { position: absolute; right: 11px; top: 1px; display: flex; gap: 7px; }
            .part { position: absolute; left: 163px; top: 145px; }
            .triad { position: absolute; left: 28px; bottom: 44px; }
            .name { position: absolute; left: 11px; bottom: 3px; font-weight: bold; font-size: 12px; }
            .task { position: absolute; right: 0; top: 60px; display: flex; flex-direction: column; gap: 1px; }
            .task button { display: flex; align-items: center; justify-content: center; width: 24px; height: 23px; background: var(--tab); border: solid #222; border-width: 1px 0 1px 1px; }
            .task .on { background: #eceef2; }
        `;
    }
    html() {
        const task = [['chat', 'Forum'], ['home', 'Resources'], ['library', 'Design library'], ['folderOpen', 'File explorer'], ['palette', 'View palette'], ['ball', 'Appearances'], ['props', 'Custom properties']];
        const bulge = 'M435 547C417 549 407.500 563 407.500 579c0 10 3.500 17 8.500 23.500h254c5-6.500 8.500-13.500 8.500-23.500 0-16-9.500-30-28-32z';
        return `
            <svg class="part" width="276" height="406" viewBox="405 290 276 406" role="img" aria-label="Model, front view">
                <defs>
                    <linearGradient id="cyl"><stop offset="0" stop-color="#74768a"/><stop offset=".16" stop-color="#6d6f7f"/><stop offset=".38" stop-color="#53545f"/><stop offset=".56" stop-color="#53545f"/><stop offset=".78" stop-color="#6b6c7c"/><stop offset="1" stop-color="#808296"/></linearGradient>
                    <linearGradient id="cone"><stop offset="0" stop-color="#6b6d7d"/><stop offset=".35" stop-color="#53545f"/><stop offset=".85" stop-color="#50515c"/><stop offset="1" stop-color="#5c5d6a"/></linearGradient>
                    <linearGradient id="bulge" x2="0" y2="1"><stop offset="0" stop-color="#888ba1"/><stop offset=".3" stop-color="#7b7d91"/><stop offset=".7" stop-color="#6a6c7b"/><stop offset="1" stop-color="#53545f"/></linearGradient>
                    <linearGradient id="lip" x2="0" y2="1"><stop offset="0" stop-color="#656777"/><stop offset=".4" stop-color="#74768a"/><stop offset="1" stop-color="#4f505b"/></linearGradient>
                    <radialGradient id="shine"><stop offset="0" stop-color="#a0a2b6"/><stop offset="1" stop-color="#a0a2b6" stop-opacity="0"/></radialGradient>
                    <radialGradient id="shade"><stop offset="0" stop-color="#51525e"/><stop offset=".4" stop-color="#51525e" stop-opacity=".8"/><stop offset="1" stop-color="#51525e" stop-opacity="0"/></radialGradient>
                    <clipPath id="body"><path d="${bulge}"/></clipPath>
                </defs>
                <g stroke="#15151a" stroke-width="1.200">
                    <path d="M491.500 293.500h103c6 3 6 12 0 15h-103c-6-3-6-12 0-15z" fill="url(#lip)"/>
                    <path d="M492 308.500h102L587 511.500h-87.500z" fill="url(#cyl)"/>
                    <path d="M497.500 511.500h91l2.500 3.500h-95.500z" fill="url(#cyl)"/>
                    <path d="M495.500 515.500h95.500v24h-95.500z" fill="url(#cyl)"/>
                    <path d="M435.500 539.500h215v7h-215z" fill="url(#cyl)"/>
                    <path d="M416 602.500h254L611.500 667h-137z" fill="url(#cone)"/>
                    <path d="M474.500 667h137v26h-137z" fill="url(#cyl)"/>
                    <path d="${bulge}" fill="url(#bulge)"/>
                </g>
                <g clip-path="url(#body)">
                    <ellipse cx="520" cy="590" rx="110" ry="32" fill="url(#shade)"/>
                    <ellipse cx="442" cy="571" rx="26" ry="9" fill="url(#shine)" opacity=".6"/>
                    <ellipse cx="621" cy="563" rx="32" ry="9" fill="url(#shine)" opacity=".8"/>
                    <ellipse cx="460" cy="553" rx="46" ry="7" fill="url(#shine)" opacity=".8"/>
                    <path d="${bulge}" fill="none" stroke="#15151a"/>
                </g>
                <ellipse cx="518" cy="301" rx="24" ry="5" fill="url(#shine)" opacity=".3"/>
                <ellipse cx="574" cy="298" rx="20" ry="4" fill="url(#shine)" opacity=".6"/>
                <path d="M435 547.500h216M474.500 667h137M475 693h136" stroke="#111" stroke-width="1.500"/>
            </svg>
            <svg class="triad" width="52" height="56" viewBox="0 -2 52 56" aria-hidden="true">
                <path d="M10.500 18h3v26h-3z" fill="#62a85c" stroke="#1c5c1c"/><path d="M12 10l4 12H8z" fill="#1c6c1c"/>
                <path d="M14 40.500h20v3H14z" fill="#f06a6a" stroke="#a01818"/><path d="M42 42l-10 4v-8z" fill="#c81c1c"/>
                <circle cx="12" cy="42" r="4.500" fill="#16169c"/>
                <path d="M9 0l3 4 3-4M12 4v4" stroke="#108010" fill="none"/>
                <path d="M43.500 37.500l5 9M48.500 37.500l-5 9" stroke="#f02020" fill="none"/>
            </svg>
            <div class="name">*Front</div>
            <div class="heads" role="toolbar">
                <sw-tool icon="zoomFit"></sw-tool><sw-tool icon="zoomArea"></sw-tool><sw-tool icon="prevView"></sw-tool><sw-tool icon="section"></sw-tool>
                <sw-tool icon="viewCube" drop></sw-tool><sw-tool icon="shaded" drop></sw-tool><sw-tool icon="glasses" drop></sw-tool>
                <sw-tool icon="ball"></sw-tool><sw-tool icon="ballScene" drop></sw-tool><sw-tool icon="monitor" drop></sw-tool>
            </div>
            <div class="ctl">
                <sw-tool icon="dockL"></sw-tool><sw-tool icon="dockR"></sw-tool><sw-tool icon="min"></sw-tool><sw-tool icon="restore"></sw-tool><sw-tool icon="close"></sw-tool>
            </div>
            <div class="task">
                ${task.map(([i, l]) => `<button aria-label="${l}" class="${i === 'home' ? 'on' : ''}"><sw-icon name="${i}"></sw-icon></button>`).join('')}
            </div>
        `;
    }
}

class SwStudyTabs extends SwElement {
    css() {
        return `
            :host { display: flex; height: 17px; border-top: 1px solid #222; border-bottom: 1px solid #222; background: #e1e4e9; }
            .nav { display: flex; gap: 1px; width: 68px; padding: 0 2px; background: var(--tab); }
            .nav button { width: 15px; display: flex; align-items: center; justify-content: center; background: #b6b8bc; border: 1px solid #8e9094; }
            .tab { height: 15px; padding: 0 16px 0 8px; border: solid #222; border-width: 0 2px 2px 1px; background: var(--tab); }
            .on { background: var(--face); border-bottom: 0; font-weight: bold; padding: 0 10px; }
        `;
    }
    html() {
        const a = (l, d) => `<button aria-label="${l}"><svg width="10" height="10"><path d="${d}" fill="#8a8c90" stroke="#8a8c90"/></svg></button>`;
        return `<div class="nav">
                ${a('First', 'M2 1v8M8 1v8L4 5z')}${a('Previous', 'M7 1v8L3 5z')}${a('Next', 'M3 1v8l4-4z')}${a('Last', 'M8 1v8M2 1v8l4-4z')}
            </div>
            <button class="tab on">Model</button><button class="tab">Motion Study 1</button>`;
    }
}

class SwStatus extends SwElement {
    css() {
        return `
            :host { display: flex; align-items: center; height: 18px; padding-left: 2px; color: #000; }
            .text { flex: 1; }
            .mode { width: 114px; }
            .unit { width: 46px; }
            .units { width: 23px; display: flex; justify-content: center; }
            .help { margin-left: 6px; }
            .tag { margin: 0 9px 0 49px; }
        `;
    }
    html() {
        return `
            <span class="text">SolidWorks Premium 2014 x64 Edition</span>
            <span class="mode">Editing Part</span>
            <span class="unit">MMGS</span>
            <button class="units" aria-label="Unit system"><svg width="6" height="4"><path d="M0 4h6L3 0z" fill="#222"/></svg></button>
            <button class="help" aria-label="Help"><sw-icon name="helpTip"></sw-icon></button>
            <button class="tag" aria-label="Tags"><sw-icon name="tag"></sw-icon></button>
            <sw-icon name="grip"></sw-icon>
        `;
    }
}

customElements.define('sw-icon', SwIcon);
customElements.define('sw-tool', SwTool);
customElements.define('sw-big-button', SwBigButton);
customElements.define('sw-titlebar', SwTitlebar);
customElements.define('sw-quickbar', SwQuickbar);
customElements.define('sw-ribbon', SwRibbon);
customElements.define('sw-tabs', SwTabs);
customElements.define('sw-sidebar', SwSidebar);
customElements.define('sw-tree-item', SwTreeItem);
customElements.define('sw-tree-panel', SwTreePanel);
customElements.define('sw-viewport', SwViewport);
customElements.define('sw-study-tabs', SwStudyTabs);
customElements.define('sw-status', SwStatus);
customElements.define('sw-app', SwApp);
</script>
</body>
</html>
